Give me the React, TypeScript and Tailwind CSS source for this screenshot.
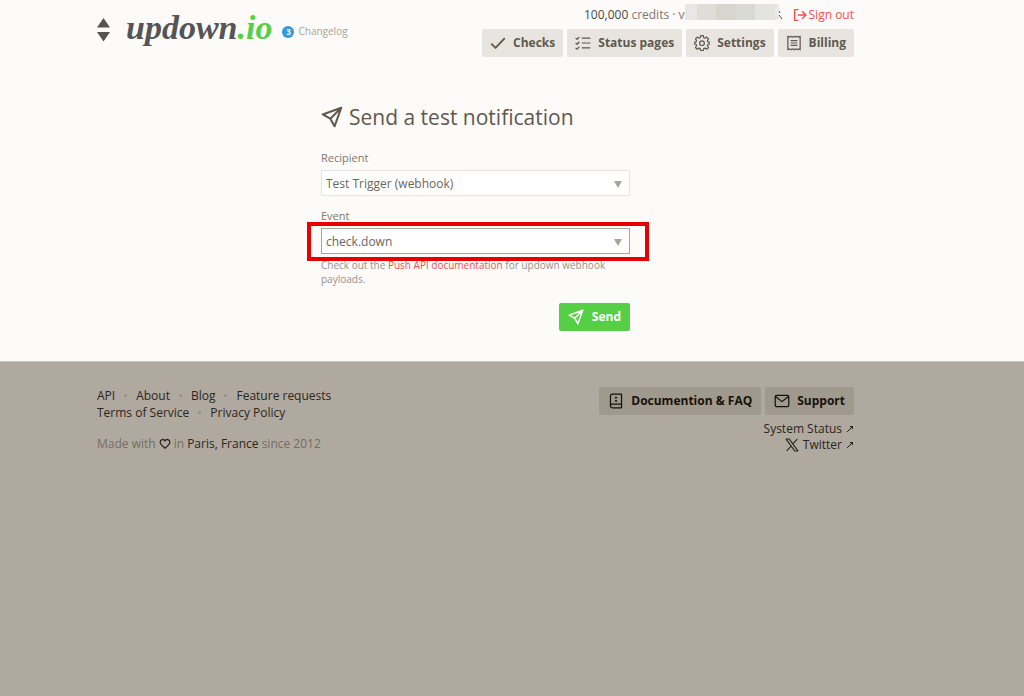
import React, { useState } from 'react';

interface IconProps {
  name: string;
  className?: string;
}

const icons: Record<string, React.ReactNode> = {
  check: <path d="M1 13l7 7L23 4" strokeWidth="3" />,
  list: <path d="M10 4h14M10 12h14M10 20h14M0 4l2.500 2L6 2M0 12l2.500 2L6 10M0 20l2.500 2L6 18" />,
  gear: (
    <>
      <path d="M10 0h4l.8 3.300 2.100.9 2.900-1.800 2.800 2.800-1.800 2.900.9 2.100L25 11v2.500l-3.300.8-.9 2.100 1.800 2.900-2.800 2.800-2.900-1.800-2.100.9L14 24.500h-4l-.8-3.300-2.100-.9-2.900 1.800-2.800-2.800 1.800-2.900-.9-2.100L-1 13.500V11l3.300-.8.9-2.100-1.800-2.900 2.800-2.800 2.900 1.800 2.100-.9z" />
      <circle cx="12" cy="12.250" r="3.800" />
    </>
  ),
  receipt: <path d="M2 1l2.500 1.500L7 1l2.500 1.500L12 1l2.500 1.500L17 1l2.500 1.500L22 1v22l-2.500-1.500L17 23l-2.500-1.500L12 23l-2.500-1.500L7 23l-2.500-1.500L2 23zM6.500 8h11M6.500 12h11M6.500 16h11" />,
  signout: <path d="M9 2H2v20h7M8 12h15M16 5l7 7-7 7" strokeWidth="2.600" />,
  send: <path d="M1 9L23 1 15 23 10 14zM23 1L10 14" strokeWidth="2.400" />,
  book: <path d="M6 1h15v22H6a3 3 0 0 1-3-3V4a3 3 0 0 1 3-3zM3 20a3 3 0 0 1 3-3h15M10.500 7.500L12 6l1.500 1.500M10.500 11l1.500 1.500 1.500-1.500" />,
  mail: <path d="M3 3h18a2 2 0 0 1 2 2v14a2 2 0 0 1-2 2H3a2 2 0 0 1-2-2V5a2 2 0 0 1 2-2zM2 5l10 8L22 5" />,
  heart: <path d="M12 21C5 15 1.500 12 1.500 8a5.500 5.500 0 0 1 10.500-2.500A5.500 5.500 0 0 1 22.500 8c0 4-3.500 7-10.500 13z" strokeWidth="2.800" />,
  x: <path d="M1 1h6l16 22h-6zM22 1l-9 9.500M2 23l9-9.500" />,
};

const Icon: React.FC<IconProps> = ({ name, className = 'size-4' }) => (
  <svg
    viewBox="-1 -1 26 26"
    className={`shrink-0 ${className}`}
    fill="none"
    stroke="currentColor"
    strokeWidth="2"
    strokeLinejoin="round"
    aria-hidden="true"
  >
    {icons[name]}
  </svg>
);

const ExternalArrow: React.FC = () => (
  <svg viewBox="0 0 8 8" className="size-2" fill="none" stroke="currentColor" aria-hidden="true">
    <path d="M1 7l6-6" />
    <path d="M3.500 1H7v3.500z" fill="currentColor" stroke="none" />
  </svg>
);

const navItems = [
  { label: 'Checks', icon: 'check' },
  { label: 'Status pages', icon: 'list' },
  { label: 'Settings', icon: 'gear' },
  { label: 'Billing', icon: 'receipt' },
];

const footerLinks = [
  ['API', 'About', 'Blog', 'Feature requests'],
  ['Terms of Service', 'Privacy Policy'],
];

interface SelectFieldProps {
  id: string;
  label: string;
  value: string;
  options: string[];
  active?: boolean;
  onChange: (value: string) => void;
}

const SelectField: React.FC<SelectFieldProps> = ({ id, label, value, options, active, onChange }) => (
  <div>
    <label htmlFor={id} className="block text-[11px] leading-4 text-[#7d776d]">
      {label}
    </label>
    <div className="relative mt-1">
      <select
        id={id}
        value={value}
        onChange={(e) => onChange(e.target.value)}
        className={`block h-[26px] w-full appearance-none border bg-white px-1 pt-0.5 text-xs text-[#6b655b] outline-none ${
          active ? 'border-[#aaa59a]' : 'border-[#e8e5e0]'
        }`}
      >
        {options.map((option) => (
          <option key={option}>{option}</option>
        ))}
      </select>
      <svg viewBox="0 0 8 7" className="pointer-events-none absolute top-[11px] right-2 h-[7px] w-2" aria-hidden="true">
        <path d="M0 0h8L4 7z" fill="#aaa398" />
      </svg>
      {active && (
        <div className="pointer-events-none absolute -top-1.5 -right-[19px] -bottom-[7px] -left-3.5 border-4 border-[#e60000]" />
      )}
    </div>
  </div>
);

const App: React.FC = () => {
  const [recipient, setRecipient] = useState('Test Trigger (webhook)');
  const [event, setEvent] = useState('check.down');

  return (
    <div className="flex min-h-screen flex-col bg-[#fcfbf9] font-['Open_Sans','Noto_Sans',sans-serif] text-xs text-[#5f594e]">
      {/* Header */}
      <header className="pr-[73px]">
        <div className="mx-auto flex max-w-[757px] items-start justify-between">
          <div className="flex items-center pt-2">
            <svg viewBox="0 0 13 24" className="mt-1 h-6 w-[13px]" fill="#555" aria-hidden="true">
              <path d="M6.500 0L13 9.500H0zM0 14h13L6.500 23.500z" />
            </svg>
            <a href="#home" className="ml-4 font-['Liberation_Serif',serif] text-[34px] leading-10 font-bold text-[#555] italic">
              updown<span className="text-[#55cf45]">.io</span>
            </a>
            <a href="#changelog" className="mt-2 ml-2.5 flex items-center gap-1 text-[10px] text-[#aaa398]">
              <span className="flex size-3 items-center justify-center rounded-full bg-[#3498db] text-[8px] font-bold text-white">3</span>
              Changelog
            </a>
          </div>
          <div className="flex flex-col items-end">
            <div className="mt-1.5 flex h-[18px] items-center">
              <span className="text-[#7d776d]">
                <span className="text-[#4b463d]">100,000</span> credits · v
              </span>
              <div className="-mt-0.5 flex h-4 w-[94px] self-start">
                <div className="w-3 bg-[#e9e7e5]" />
                <div className="flex-1 bg-[#deddd9]" />
                <div className="flex-1 bg-[#d8d5cf]" />
                <div className="flex-1 bg-[#d9d9d4]" />
                <div className="flex-1 bg-[#e3e3df]" />
                <div className="w-1 bg-[#e9e9e7]" />
              </div>
              <svg viewBox="0 0 4 10" className="h-2.5 w-1" fill="none" stroke="#4b463d" aria-hidden="true">
                <path d="M0 1l1 2M0 5l3 4" />
              </svg>
              <a href="#signout" className="ml-2.5 flex items-center gap-0.5 text-[#f0524a]">
                <Icon name="signout" className="size-3.5" />
                Sign out
              </a>
            </div>
            <nav className="mt-[5px] flex gap-1">
              {navItems.map((item) => (
                <a
                  key={item.label}
                  href={`#${item.icon}`}
                  className="flex h-7 items-center gap-[7px] rounded-xs bg-[#e8e5e0] px-2 font-bold"
                >
                  <Icon name={item.icon} />
                  {item.label}
                </a>
              ))}
            </nav>
          </div>
        </div>
      </header>

      {/* Test notification form */}
      <main className="pr-[73px]">
        <form className="mx-auto mt-11 h-[260px] max-w-[309px]" onSubmit={(e) => e.preventDefault()}>
          <h1 className="flex items-center gap-1.5 text-[21px] leading-8">
            <Icon name="send" className="size-[22px]" />
            Send a test notification
          </h1>
          <div className="mt-[17px] flex flex-col gap-3">
            <SelectField
              id="recipient"
              label="Recipient"
              value={recipient}
              options={['Test Trigger (webhook)']}
              onChange={setRecipient}
            />
            <SelectField
              id="event"
              label="Event"
              value={event}
              options={['check.down', 'check.up']}
              active
              onChange={setEvent}
            />
          </div>
          <p className="mt-1 pr-6 text-[10px] leading-3.5 text-[#96918a]">
            Check out the{' '}
            <a href="#api" className="text-[#f0524a]">
              Push API documentation
            </a>{' '}
            for updown webhook payloads.
          </p>
          <div className="mt-[17px] flex justify-end">
            <button type="submit" className="flex h-7 items-center gap-2 rounded-xs bg-[#55cf45] px-[9px] font-bold text-white">
              <Icon name="send" />
              Send
            </button>
          </div>
        </form>
      </main>

      {/* Footer */}
      <footer className="flex-1 border-t border-[#c9c4bc] bg-[#b0a99f] pr-[73px] text-[#2c261c]">
        <div className="mx-auto flex max-w-[757px] justify-between pt-[25px]">
          <div>
            {footerLinks.map((row) => (
              <ul key={row[0]} className="flex leading-[17px]">
                {row.map((label, i) => (
                  <li key={label} className="flex items-center">
                    {i > 0 && <span className="mx-[9px] size-[3px] rounded-full bg-[#958e83]" />}
                    <a href="#footer">{label}</a>
                  </li>
                ))}
              </ul>
            ))}
            <p className="mt-3.5 flex items-center gap-[3px] leading-[17px] text-[#756e63]">
              Made with
              <Icon name="heart" className="size-3 text-[#2c261c]" />
              <span>
                in <a href="#paris" className="text-[#2c261c]">Paris, France</a> since 2012
              </span>
            </p>
          </div>
          <div className="flex flex-col items-end">
            <div className="flex gap-1 font-bold text-[#17120a]">
              <a href="#docs" className="flex h-7 items-center gap-[7px] rounded-xs bg-[#a0998d] px-[9px]">
                <Icon name="book" />
                Documention &amp; FAQ
              </a>
              <a href="#support" className="flex h-7 items-center gap-[7px] rounded-xs bg-[#a0998d] px-[9px]">
                <Icon name="mail" />
                Support
              </a>
            </div>
            <a href="#status" className="mt-1.5 flex items-center gap-1 leading-4">
              System Status
              <ExternalArrow />
            </a>
            <a href="#twitter" className="flex items-center gap-1 leading-4">
              <Icon name="x" className="size-3.5" />
              Twitter
              <ExternalArrow />
            </a>
          </div>
        </div>
      </footer>
    </div>
  );
};

export default App;
